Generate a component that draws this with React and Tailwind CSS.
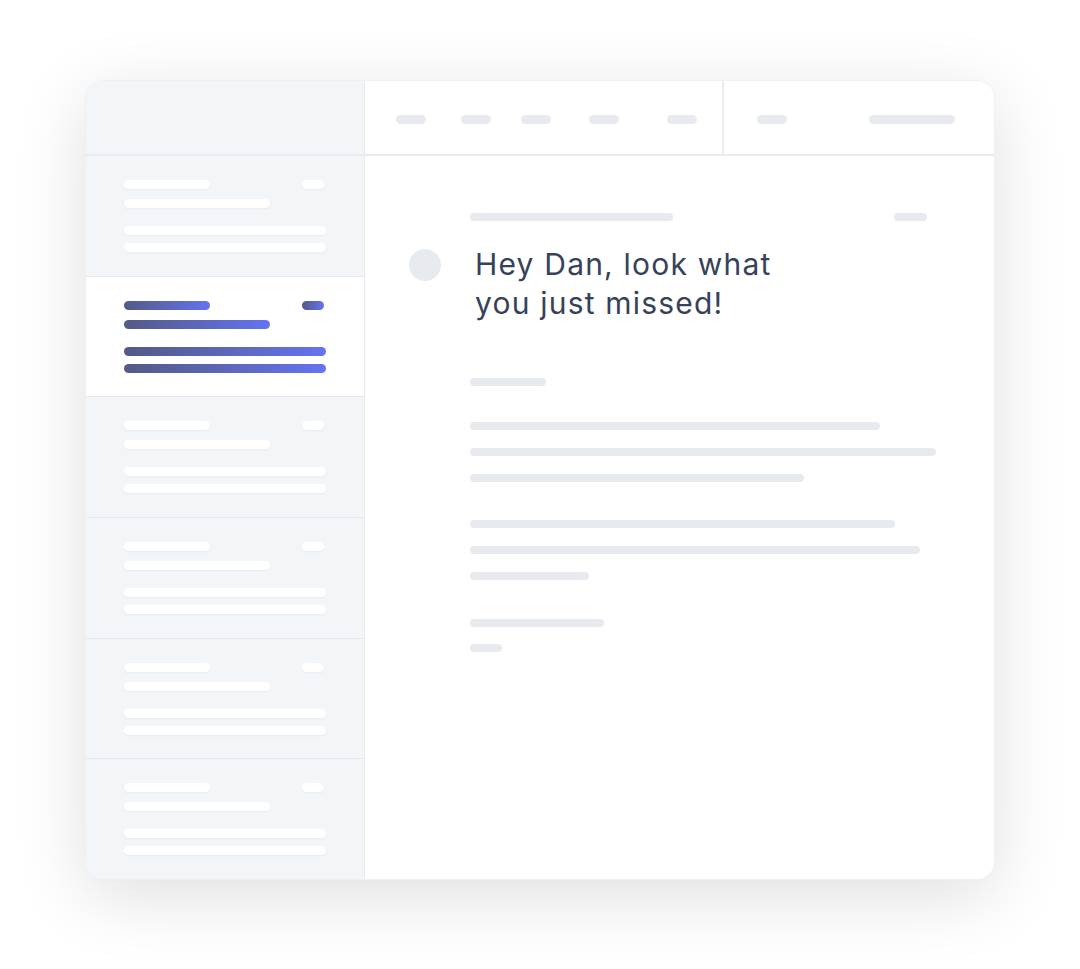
const Bar = ({ className = "" }) => <div className={`h-[9px] rounded-full ${className}`} />;

const items = [false, true, false, false, false, false];

const SidebarItem = ({ active }) => {
  const tone = active
    ? "bg-gradient-to-r from-[#535a85] to-[#6572f2]"
    : "bg-white shadow-[0_1px_2px_rgba(15,23,42,0.05)]";
  return (
    <div
      className={`flex-1 flex flex-col justify-center pl-[38px] pr-[38px] border-b border-[#e6eaf0] last:border-b-0 ${
        active ? "bg-white" : "bg-[#f3f6f9]"
      }`}
    >
      <div className="flex items-center justify-between pr-[2px]">
        <Bar className={`w-[86px] ${tone}`} />
        <Bar className={`w-[22px] ${tone}`} />
      </div>
      <Bar className={`w-[146px] mt-[10px] ${tone}`} />
      <Bar className={`w-full mt-[18px] ${tone}`} />
      <Bar className={`w-full mt-[8px] ${tone}`} />
    </div>
  );
};

const Line = ({ w, className = "" }) => (
  <div className={`h-[8px] rounded-full bg-[#e7eaef] ${w} ${className}`} />
);

export default function App() {
  return (
    <div className="min-h-screen bg-white pt-[80px] pl-[85px]" style={{ fontFamily: "Inter, 'Liberation Sans', sans-serif" }}>
      <div className="w-[910px] h-[800px] rounded-[18px] bg-white border border-[#eef1f4] shadow-[0_16px_70px_rgba(0,0,0,0.13)] overflow-hidden flex">
        <aside className="w-[279px] shrink-0 flex flex-col border-r border-[#e6eaf0] bg-[#f3f6f9]">
          <div className="h-[75px] shrink-0 border-b-2 border-[#e8ecf1]" />
          {items.map((active, i) => (
            <SidebarItem key={i} active={active} />
          ))}
        </aside>

        <main className="flex-1 min-w-0 flex flex-col">
          <header className="h-[75px] shrink-0 flex border-b-2 border-[#e8ecf1]">
            <div className="w-[359px] shrink-0 flex items-center pt-[4px] border-r-2 border-[#e8ecf1]">
              <Line w="w-[30px]" className="ml-[31px] h-[9px]" />
              <Line w="w-[30px]" className="ml-[35px] h-[9px]" />
              <Line w="w-[30px]" className="ml-[30px] h-[9px]" />
              <Line w="w-[30px]" className="ml-[38px] h-[9px]" />
              <Line w="w-[30px]" className="ml-[48px] h-[9px]" />
            </div>
            <div className="flex-1 flex items-center justify-between pt-[4px] pl-[33px] pr-[39px]">
              <Line w="w-[30px]" className="h-[9px]" />
              <Line w="w-[86px]" className="h-[9px]" />
            </div>
          </header>

          <section className="flex-1 pl-[44px] pr-[67px] pt-[57px]">
            <div className="flex items-center justify-between pl-[61px]">
              <Line w="w-[203px]" />
              <Line w="w-[33px]" />
            </div>

            <div className="flex items-start mt-[24px]">
              <div className="w-8 h-8 rounded-full bg-[#e7eaef] shrink-0 mt-[4px]" />
              <h1 className="ml-[34px] text-[30px] leading-[39px] text-[#36425a] font-normal tracking-[0.04em]">
                Hey Dan, look what
                <br />
                you just missed!
              </h1>
            </div>

            <div className="pl-[61px]">
              <Line w="w-[76px]" className="mt-[55px]" />
              <Line w="w-[410px]" className="mt-[36px]" />
              <Line w="w-[466px]" className="mt-[18px]" />
              <Line w="w-[334px]" className="mt-[18px]" />
              <Line w="w-[425px]" className="mt-[38px]" />
              <Line w="w-[450px]" className="mt-[18px]" />
              <Line w="w-[119px]" className="mt-[18px]" />
              <Line w="w-[134px]" className="mt-[39px]" />
              <Line w="w-[32px]" className="mt-[17px]" />
            </div>
          </section>
        </main>
      </div>
    </div>
  );
}
